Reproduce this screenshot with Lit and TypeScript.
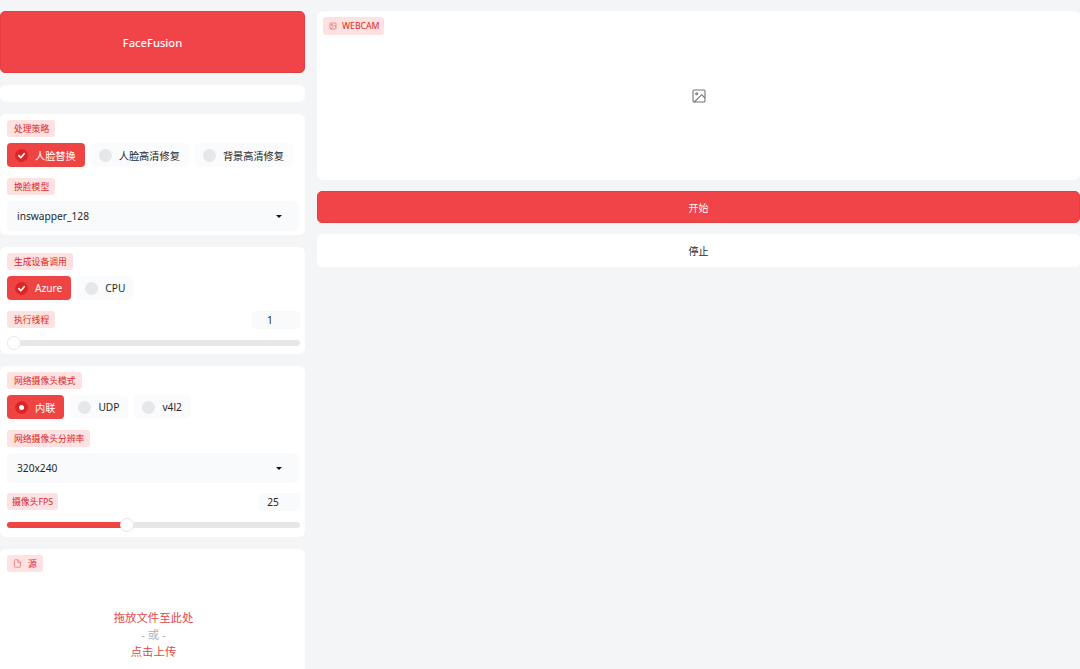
import { LitElement, html, css, svg } from "lit";
import { customElement } from "lit/decorators.js";

@customElement("app-root")
export class AppRoot extends LitElement {
  static styles = css`
    :host { display: block; width: 1080px; height: 669px; overflow: hidden; background: #f3f5f7;
      font-family: "Noto Sans", "Noto Sans CJK SC", sans-serif; color: #27272a; }
    * { box-sizing: border-box; }
    .page { display: grid; grid-template-columns: 305px 763px; column-gap: 12px; padding-top: 11px; }
    .col { display: flex; flex-direction: column; gap: 12px; min-width: 0; }
    .card { background: #fff; border-radius: 6px; padding: 6px 5px 4px 7px; display: flex; flex-direction: column; }
    .brand { height: 62px; border-radius: 5px; background: #f04448; border: 1px solid #e53e3e; color: #fff;
      display: flex; align-items: center; justify-content: center; font-size: 11.2px; font-weight: 500; }
    .blank { height: 17px; padding: 0; }
    .chip { align-self: flex-start; height: 17px; padding: 0 6px 0 7px; display: inline-flex; align-items: center; gap: 6px;
      background: #fee2e2; color: #dc2626; font-size: 8.8px; border-radius: 3px; white-space: nowrap; }
    .chip svg { width: 9px; height: 9px; flex: none; }
    .chip.tight { padding: 0 5px; }
    .chip.file { padding: 0 6px; }
    .radios { display: flex; gap: 6px; margin-top: 6px; height: 24px; }
    .radio { display: flex; align-items: center; gap: 7px; height: 24px; padding: 0 9px 0 8px; border-radius: 4px;
      background: #fafbfc; font-size: 10.2px; color: #27272a; white-space: nowrap; }
    .radio .dot { width: 13px; height: 13px; border-radius: 50%; background: #e5e7eb; flex: none;
      display: flex; align-items: center; justify-content: center; }
    .radio.on { background: #ef4444; color: #fff; }
    .radio.on .dot { background: #dc2626; }
    .radio svg { width: 9px; height: 9px; }
    .radio .pip { width: 5px; height: 5px; border-radius: 50%; background: #fff; }
    .field { margin-top: 11px; }
    .sel { margin-top: 6px; height: 30px; background: #f9fafb; border-radius: 5px; margin-right: 1px;
      display: flex; align-items: center; justify-content: space-between; padding: 0 17px 0 10px; font-size: 10.2px; color: #27272a; }
    .caret { width: 0; height: 0; border-left: 3px solid transparent; border-right: 3px solid transparent; border-top: 3px solid #111; }
    .row { display: flex; align-items: center; justify-content: space-between; }
    .row.near { margin-top: 10px; }
    .num { width: 48px; height: 18px; background: #f9fafb; border-radius: 4px; font-size: 10.2px;
      display: flex; align-items: center; justify-content: center; padding-right: 12px; }
    .num.pad { width: 41px; padding-right: 13px; }
    .track { position: relative; height: 6px; margin: 11px 0 4px 0; background: #e6e7e8; border-radius: 3px; }
    .track.low { margin-bottom: 5px; }
    .fill { height: 6px; background: #ef4444; border-radius: 3px 0 0 3px; }
    .thumb { position: absolute; top: -4px; width: 14px; height: 14px; border-radius: 50%; background: #fff;
      border: 1px solid #e5e7eb; transform: translateX(-50%); }
    .src { height: 140px; }
    .drop { display: flex; flex-direction: column; align-items: center; margin-top: 37px; font-size: 11.4px; line-height: 17px; color: #dc2626; opacity: .85; }
    .drop .or { color: #9ca3af; }
    .cam { height: 169px; padding: 6px; }
    .cam .chip { gap: 5px; padding: 0 5px 0 6px; font-size: 8.7px; height: 18px; }
    .cam .chip svg { width: 8px; height: 8px; }
    .camicon { flex: 1; display: flex; align-items: center; justify-content: center; margin-top: 16px; margin-bottom: 34px; }
    .camicon svg { width: 16px; height: 16px; color: #71717a; }
    .right { gap: 11px; }
    .primary { height: 32px; background: #f04448; border: 1px solid #e53e3e; border-radius: 5px; color: #fff;
      font-size: 10px; display: flex; align-items: center; justify-content: center; }
    .secondary { height: 33px; background: #fff; border-radius: 5px; font-size: 10px; color: #27272a;
      display: flex; align-items: center; justify-content: center; }
  `;

  private check = svg`<svg viewBox="0 0 10 10" fill="none" stroke="#fff" stroke-width="1.8" stroke-linecap="round" stroke-linejoin="round"><path d="M2 5.2 4.2 7.4 8 3"/></svg>`;

  private radio(label: string, on = false, kind = "check") {
    return html`<div class="radio ${on ? "on" : ""}">
      <span class="dot">${on ? (kind === "check" ? this.check : html`<span class="pip"></span>`) : ""}</span>
      <span>${label}</span>
    </div>`;
  }

  render() {
    return html`<div class="page">
      <div class="col">
        <div class="brand">FaceFusion</div>
        <div class="card blank"></div>
        <div class="card">
          <span class="chip">处理策略</span>
          <div class="radios">${this.radio("人脸替换", true)}${this.radio("人脸高清修复")}${this.radio("背景高清修复")}</div>
          <span class="chip field">换脸模型</span>
          <div class="sel"><span>inswapper_128</span><span class="caret"></span></div>
        </div>
        <div class="card">
          <span class="chip">生成设备调用</span>
          <div class="radios">${this.radio("Azure", true)}${this.radio("CPU")}</div>
          <div class="row field"><span class="chip">执行线程</span><span class="num">1</span></div>
          <div class="track"><span class="thumb" style="left:7px"></span></div>
        </div>
        <div class="card">
          <span class="chip">网络摄像头模式</span>
          <div class="radios">${this.radio("内联", true, "pip")}${this.radio("UDP")}${this.radio("v4l2")}</div>
          <span class="chip field">网络摄像头分辨率</span>
          <div class="sel"><span>320x240</span><span class="caret"></span></div>
          <div class="row near"><span class="chip tight">摄像头FPS</span><span class="num pad">25</span></div>
          <div class="track low"><div class="fill" style="width:120px"></div><span class="thumb" style="left:120px"></span></div>
        </div>
        <div class="card src">
          <span class="chip file">
            <svg viewBox="0 0 24 24" fill="none" stroke="currentColor" stroke-width="2" opacity=".6"><path d="M13 2H6a2 2 0 0 0-2 2v16a2 2 0 0 0 2 2h12a2 2 0 0 0 2-2V9z"/><path d="M13 2v7h7"/></svg>
            <span>源</span>
          </span>
          <div class="drop"><span>拖放文件至此处</span><span class="or">- 或 -</span><span>点击上传</span></div>
        </div>
      </div>
      <div class="col right">
        <div class="card cam">
          <span class="chip">
            <svg viewBox="0 0 24 24" fill="none" stroke="currentColor" stroke-width="2" opacity=".7"><rect x="3" y="3" width="18" height="18" rx="2"/><circle cx="9" cy="9" r="2"/><path d="m21 15-5-5L5 21"/></svg>
            <span>WEBCAM</span>
          </span>
          <div class="camicon"><svg viewBox="0 0 24 24" fill="none" stroke="currentColor" stroke-width="1.6"><rect x="3" y="3" width="18" height="18" rx="2"/><circle cx="8.5" cy="8.5" r="1.5"/><path d="m21 15-5-5L5 21"/></svg></div>
        </div>
        <div class="primary">开始</div>
        <div class="secondary">停止</div>
      </div>
    </div>`;
  }
}
